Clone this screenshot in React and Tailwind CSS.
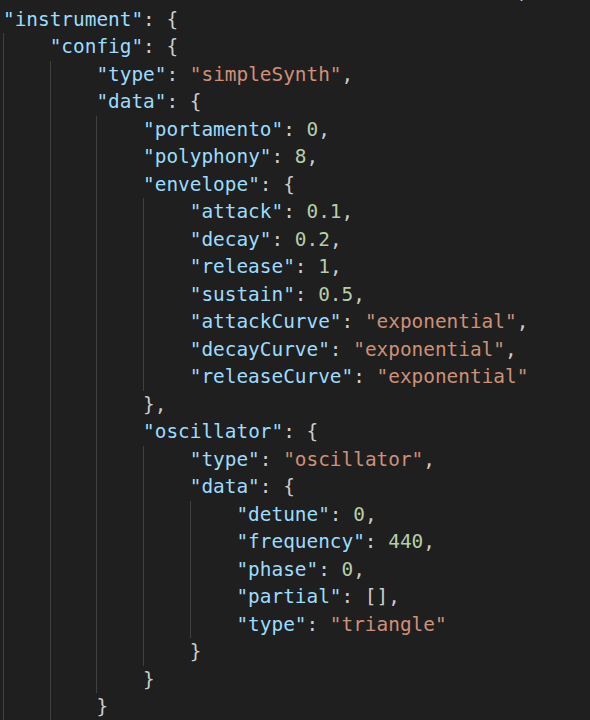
import React from "react";

const K = "text-[#9cdcfe]";
const S = "text-[#ce9178]";
const N = "text-[#b5cea8]";
const P = "text-[#cccccc]";

// token helpers
const k = (t) => ({ c: K, t: `"${t}"` });
const s = (t) => ({ c: S, t: `"${t}"` });
const n = (t) => ({ c: N, t });
const p = (t) => ({ c: P, t });

const lines = [
  { i: 0, toks: [p(" ".repeat(44) + ",")] },
  { i: 0, toks: [k("instrument"), p(": {")] },
  { i: 1, toks: [k("config"), p(": {")] },
  { i: 2, toks: [k("type"), p(": "), s("simpleSynth"), p(",")] },
  { i: 2, toks: [k("data"), p(": {")] },
  { i: 3, toks: [k("portamento"), p(": "), n("0"), p(",")] },
  { i: 3, toks: [k("polyphony"), p(": "), n("8"), p(",")] },
  { i: 3, toks: [k("envelope"), p(": {")] },
  { i: 4, toks: [k("attack"), p(": "), n("0.1"), p(",")] },
  { i: 4, toks: [k("decay"), p(": "), n("0.2"), p(",")] },
  { i: 4, toks: [k("release"), p(": "), n("1"), p(",")] },
  { i: 4, toks: [k("sustain"), p(": "), n("0.5"), p(",")] },
  { i: 4, toks: [k("attackCurve"), p(": "), s("exponential"), p(",")] },
  { i: 4, toks: [k("decayCurve"), p(": "), s("exponential"), p(",")] },
  { i: 4, toks: [k("releaseCurve"), p(": "), s("exponential")] },
  { i: 3, toks: [p("},")] },
  { i: 3, toks: [k("oscillator"), p(": {")] },
  { i: 4, toks: [k("type"), p(": "), s("oscillator"), p(",")] },
  { i: 4, toks: [k("data"), p(": {")] },
  { i: 5, toks: [k("detune"), p(": "), n("0"), p(",")] },
  { i: 5, toks: [k("frequency"), p(": "), n("440"), p(",")] },
  { i: 5, toks: [k("phase"), p(": "), n("0"), p(",")] },
  { i: 5, toks: [k("partial"), p(": [],")] },
  { i: 5, toks: [k("type"), p(": "), s("triangle")] },
  { i: 4, toks: [p("}")] },
  { i: 3, toks: [p("}")] },
  { i: 2, toks: [p("}")] },
];

export default function App() {
  return (
    <div className="w-[590px] h-[720px] overflow-hidden bg-[#1f1f1f]">
      <div
        className="mt-[-22px] pl-[3px] text-[19.4px]"
        style={{ fontFamily: '"DejaVu Sans Mono", "Liberation Mono", monospace' }}
      >
        {lines.map((ln, idx) => (
          <div key={idx} className="flex h-[27.5px]">
            {Array.from({ length: ln.i }).map((_, j) => (
              <span
                key={j}
                className="w-[4ch] shrink-0 h-full border-l border-[#404040]"
              />
            ))}
            <span className="leading-[27.5px] whitespace-pre">
              {ln.toks.map((t, j) => (
                <span key={j} className={t.c}>
                  {t.t}
                </span>
              ))}
            </span>
          </div>
        ))}
      </div>
    </div>
  );
}
